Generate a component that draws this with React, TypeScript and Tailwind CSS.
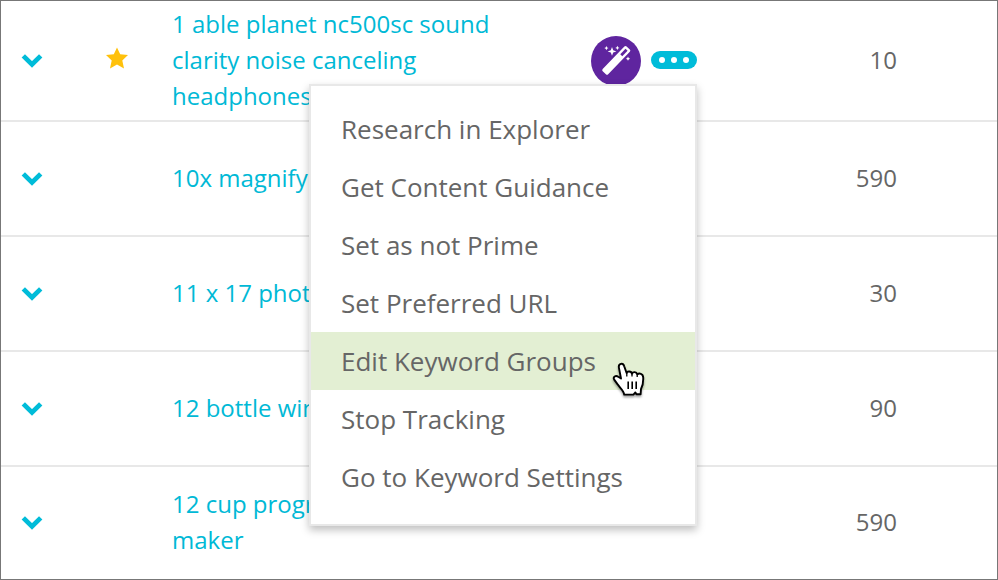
import React from 'react';
import { clsx } from 'clsx';

interface Keyword {
  text: string;
  volume: number;
  prime?: boolean;
}

const KEYWORDS: Keyword[] = [
  { text: '1 able planet nc500sc sound clarity noise canceling headphones', volume: 10, prime: true },
  { text: '10x magnify', volume: 590 },
  { text: '11 x 17 photo', volume: 30 },
  { text: '12 bottle wine', volume: 90 },
  { text: '12 cup programmable coffee maker', volume: 590 },
];

const MENU_ITEMS = [
  'Research in Explorer',
  'Get Content Guidance',
  'Set as not Prime',
  'Set Preferred URL',
  'Edit Keyword Groups',
  'Stop Tracking',
  'Go to Keyword Settings',
];

const ACTIVE_ITEM = 'Edit Keyword Groups';

const ChevronIcon = () => (
  <svg width="22" height="14" viewBox="0 0 22 14" fill="none" aria-hidden="true">
    <path d="M2.3 1.9 11 10.4 19.7 1.9" stroke="#00bcd9" strokeWidth="4.8" />
  </svg>
);

const StarIcon = () => (
  <svg width="22" height="22" viewBox="0 0 22 22" role="img" aria-label="Prime keyword">
    <path
      d="M11 0.4 14.2 7.3 22 8.1 16.3 13.4 18 21.4 11 17.6 4 21.4 5.7 13.4 0 8.1 7.8 7.3Z"
      fill="#ffc10b"
    />
  </svg>
);

const WandIcon = () => (
  <svg width="50" height="50" viewBox="0 0 50 50" aria-hidden="true">
    <g transform="translate(25.4 24.2) rotate(-46)">
      <rect x="-17.4" y="-3.8" width="34.4" height="7.6" rx="1.6" fill="#fff" />
      <rect x="7" y="-1.4" width="7.6" height="2.8" fill="#5f259f" />
    </g>
    <g fill="#fff">
      <path d="M21 11 22.2 14.2 25.4 15.4 22.2 16.6 21 19.8 19.8 16.6 16.6 15.4 19.8 14.2Z" />
      <path d="M15.4 10 16.1 11.4 17.5 12.1 16.1 12.8 15.4 14.2 14.7 12.8 13.3 12.1 14.7 11.4Z" />
      <path d="M26.4 9.8 27.1 11.2 28.5 11.9 27.1 12.6 26.4 14 25.7 12.6 24.3 11.9 25.7 11.2Z" />
      <path d="M37 20.6 37.7 22 39.1 22.7 37.7 23.4 37 24.8 36.3 23.4 34.9 22.7 36.3 22Z" />
    </g>
  </svg>
);

const HandPointer = () => (
  <svg
    className="pointer-events-none absolute top-[30px] left-[301px] z-10 drop-shadow-[0_2px_1px_rgba(0,0,0,0.35)]"
    width="34"
    height="36"
    viewBox="0 0 34 36"
    aria-hidden="true"
  >
    <path
      d="M9 16.5 6.9 5.6C6.2 1.4 11 .2 12.2 4.2L14.6 11C15 9 19.4 8.8 20 11.8 20.8 9.4 24.6 9.6 25.2 12.4 27.2 10.8 31 11.4 31.2 15.4 31.4 20 31 23.4 29 27L28.6 32.2H24.4L23.4 30.4 21.4 32.6H12.2C11.8 28.6 8 26 5.8 22.6L2.2 17.6C.6 14.8 3.8 13 6.2 14.8Z"
      fill="#fff"
      stroke="#000"
      strokeWidth="1.9"
      strokeLinejoin="round"
    />
    <path d="M14.8 11V14.5M20 12V14.5M25.2 12.6V15" stroke="#000" strokeWidth="1.3" />
    <path d="M16.2 19.4V27M20.2 19.4V27M24.2 19.4V27" stroke="#000" strokeWidth="1.6" />
  </svg>
);

const ActionMenu = () => (
  <ul
    role="menu"
    className="absolute top-full right-0 z-20 mt-[13px] w-[388px] border-2 border-[#e8e8e8] bg-white pt-3.5 pb-[18px] text-left shadow-[0_4px_8px_rgba(0,0,0,0.25)]"
  >
    {MENU_ITEMS.map((item) => (
      <li key={item} role="none" className="relative">
        <button
          type="button"
          role="menuitem"
          className={clsx(
            'block h-[58px] w-full cursor-pointer px-[30px] pt-0.5 text-left text-[26px] whitespace-nowrap text-[#666]',
            item === ACTIVE_ITEM && 'bg-[#e3efd3]'
          )}
        >
          {item}
        </button>
        {item === ACTIVE_ITEM && <HandPointer />}
      </li>
    ))}
  </ul>
);

const RowActions = () => (
  <div className="flex items-center justify-end gap-2.5">
    <button type="button" aria-label="Optimize" className="size-[50px] shrink-0 rounded-full bg-[#5f259f]">
      <WandIcon />
    </button>
    <div className="relative pb-0.5">
      <button
        type="button"
        aria-label="More actions"
        aria-expanded="true"
        className="flex h-[18px] w-[46px] items-center justify-center gap-1.5 rounded-full bg-[#00bcd9]"
      >
        <span className="size-1.5 rounded-full bg-white" />
        <span className="size-1.5 rounded-full bg-white" />
        <span className="size-1.5 rounded-full bg-white" />
      </button>
      <ActionMenu />
    </div>
  </div>
);

export default function App() {
  return (
    <div className="min-h-screen overflow-hidden border border-[#777] bg-white font-['Open_Sans',sans-serif] text-2xl text-[#666]">
      <table className="w-full table-fixed border-separate border-spacing-0">
        <colgroup>
          <col className="w-[62px]" />
          <col className="w-[108px]" />
          <col className="w-[380px]" />
          <col className="w-[146px]" />
          <col />
        </colgroup>
        <tbody className="[&>tr:first-child>td]:h-[121px] [&>tr:last-child>td]:h-[112px] [&>tr:last-child>td]:border-b-0">
          {KEYWORDS.map((keyword) => (
            <tr key={keyword.text} className="[&>td]:h-[115px] [&>td]:border-b-2 [&>td]:border-[#e8e8e8] [&>td]:p-0">
              <td>
                <button type="button" aria-label={`Expand ${keyword.text}`} className="mx-auto block">
                  <ChevronIcon />
                </button>
              </td>
              <td>
                <div className="flex justify-center pb-1.5">{keyword.prime && <StarIcon />}</div>
              </td>
              <td>
                <a href="#" className="block max-w-[370px] pb-0.5 pl-px leading-9 text-[#00b9d6]">
                  {keyword.text}
                </a>
              </td>
              <td>{keyword.prime && <RowActions />}</td>
              <td>
                <div className="pr-[100px] pb-0.5 text-right">{keyword.volume}</div>
              </td>
            </tr>
          ))}
        </tbody>
      </table>
    </div>
  );
}
